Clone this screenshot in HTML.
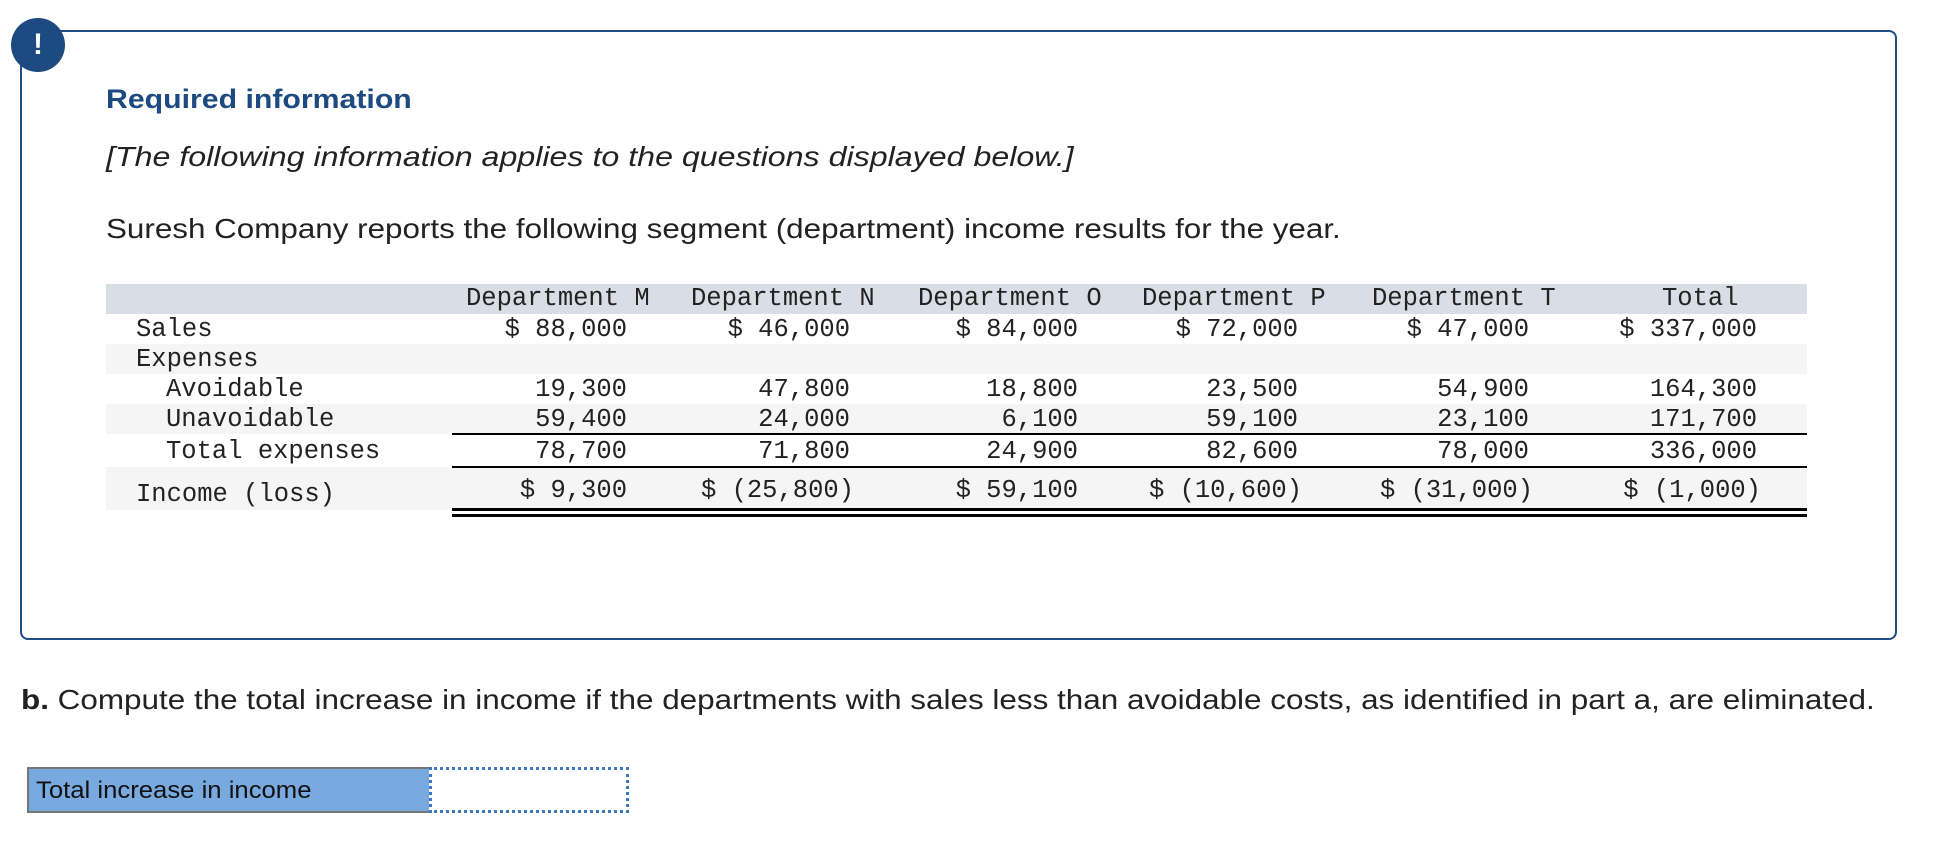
<!DOCTYPE html>
<html><head><meta charset="utf-8"><style>
body{margin:0;width:1938px;height:842px;background:#fff;position:relative;overflow:hidden;font-family:"Liberation Sans",Arial,sans-serif;color:#222}
.a{position:absolute;white-space:nowrap}
.sx{transform-origin:0 0}
.box{position:absolute;left:20px;top:30px;width:1877px;height:610px;border:2px solid #1f4e85;border-radius:0 8px 8px 8px;box-sizing:border-box}
.circ{position:absolute;left:11px;top:18px;width:54px;height:54px;border-radius:50%;background:#1d4a80;color:#fff;font:bold 30px "Liberation Sans",sans-serif;text-align:center;line-height:54px}
.m{font-family:"Liberation Mono",monospace;font-size:25.5px;color:#222}
.r{position:absolute;left:106px;width:1701px}
.v{position:absolute;text-align:right;width:300px}
.ln{position:absolute;left:452px;width:1355px;height:2px;background:#000}
</style></head><body>
<div class="box"></div>
<div class="circ">!</div>
<div class="a sx" style="left:106px;top:84px;font-size:27px;font-weight:bold;color:#1d4a80;transform:scaleX(1.12)">Required information</div>
<div class="a sx" style="left:106px;top:141px;font-size:27.5px;font-style:italic;transform:scaleX(1.17)">[The following information applies to the questions displayed below.]</div>
<div class="a sx" style="left:106px;top:213px;font-size:27.5px;transform:scaleX(1.141)">Suresh Company reports the following segment (department) income results for the year.</div>

<div class="r" style="top:284px;height:30px;background:#d9dde5"></div>
<div class="r" style="top:344px;height:30px;background:#f5f5f5"></div>
<div class="r" style="top:404px;height:30px;background:#f5f5f5"></div>
<div class="r" style="top:467px;height:43px;background:#f5f5f5"></div>
<div class="ln" style="top:433px"></div>
<div class="ln" style="top:466px"></div>
<div class="ln" style="top:508px;height:3px"></div>
<div class="ln" style="top:514px;height:3px"></div>

<div class="m">
<div class="a" style="left:466px;top:284px">Department M</div>
<div class="a" style="left:691px;top:284px">Department N</div>
<div class="a" style="left:918px;top:284px">Department O</div>
<div class="a" style="left:1142px;top:284px">Department P</div>
<div class="a" style="left:1372px;top:284px">Department T</div>
<div class="a" style="left:1662px;top:284px">Total</div>

<div class="a" style="left:136px;top:315px">Sales</div>
<div class="a" style="left:136px;top:345px">Expenses</div>
<div class="a" style="left:166px;top:375px">Avoidable</div>
<div class="a" style="left:166px;top:405px">Unavoidable</div>
<div class="a" style="left:166px;top:437px">Total expenses</div>
<div class="a" style="left:136px;top:480px">Income (loss)</div>
</div>

<div class="m" id="vals"></div>
<script>
var cols=[627,850,1078,1298,1529,1757];
var rows=[[315,["$ 88,000","$ 46,000","$ 84,000","$ 72,000","$ 47,000","$ 337,000"]],
[375,["19,300","47,800","18,800","23,500","54,900","164,300"]],
[405,["59,400","24,000","6,100","59,100","23,100","171,700"]],
[437,["78,700","71,800","24,900","82,600","78,000","336,000"]],
[476,["$ 9,300","$ (25,800)","$ 59,100","$ (10,600)","$ (31,000)","$ (1,000)"]]];
var h="";
rows.forEach(function(r){r[1].forEach(function(t,i){var right=cols[i];if(t.indexOf(")")>=0)right+=4;
h+='<div class="a v" style="left:'+(right-300)+'px;top:'+r[0]+'px">'+t+'</div>';});});
document.getElementById("vals").innerHTML=h;
</script>

<div class="a sx" style="left:21px;top:684px;font-size:27.5px;transform:scaleX(1.143)"><b>b.</b> Compute the total increase in income if the departments with sales less than avoidable costs, as identified in part a, are eliminated.</div>
<div class="a" style="left:27px;top:767px;width:404px;height:46px;box-sizing:border-box;border:2px solid #777;border-right:none;background:#78aae0;color:#111"><span class="a sx" style="left:7px;top:8px;font-size:24px;transform:scaleX(1.07)">Total increase in income</span></div>
<div class="a" style="left:429px;top:767px;width:200px;height:46px;box-sizing:border-box;border:3px dotted #3a78c2;background:#fff"></div>
</body></html>
